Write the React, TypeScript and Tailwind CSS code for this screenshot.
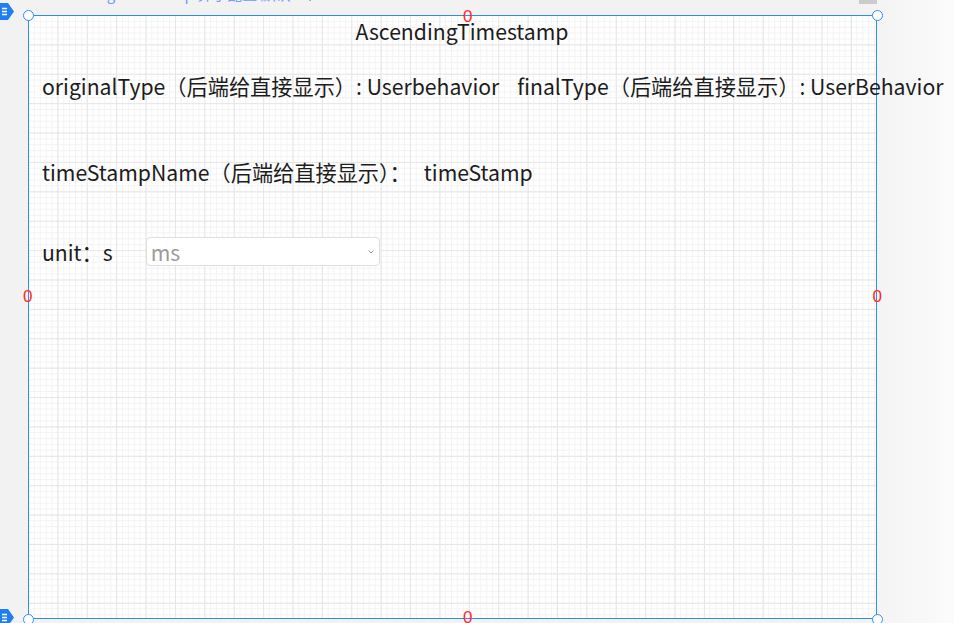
import React from 'react';

const font = "font-['Noto_Sans_CJK_SC','Noto_Sans',sans-serif]";

function Handle({ className }: { className: string }) {
  return (
    <div
      className={`absolute h-[11px] w-[11px] rounded-full border-[1.5px] border-[#2f8cf5] bg-white ${className}`}
    />
  );
}

function ZeroMark({ className }: { className: string }) {
  return (
    <span
      className={`absolute text-[17px] leading-none text-[#ff2b2b] font-['Liberation_Sans',sans-serif] ${className}`}
    >
      0
    </span>
  );
}

function Tag({ className }: { className: string }) {
  return (
    <svg className={`absolute ${className}`} width="14" height="17" viewBox="0 0 14 17">
      <path d="M0 0 H8 L14 8.5 L8 17 H0 Z" fill="#1f7ff0" />
      <path d="M2 5.5 H7 M2 8.5 H7 M2 11.5 H7" stroke="#fff" strokeWidth="1.4" />
    </svg>
  );
}

export default function App() {
  return (
    <div className={`relative h-[623px] w-[954px] overflow-hidden bg-[linear-gradient(to_right,#f2f2f2_0%,#f2f2f2_90%,#fbfbfb_100%)] ${font}`}>
      {/* cut-off header strip */}
      <div className="flex h-[15px] items-start pl-[43px]">
        <div className="h-[4px] overflow-hidden">
          <div className="-mt-[15px] text-[15px] leading-[18px] text-[#6f9ef8]">AscendingTimestamp 算子配置 默认</div>
        </div>
        <svg className="ml-[14px] -mt-[4px]" width="10" height="8" viewBox="0 0 10 8">
          <path d="M0 0 L5 5 L10 0 Z" fill="#1f7ff0" />
        </svg>
        <div className="ml-auto mr-[77px] h-[4px] w-[18px] bg-[#c9cbcd]" />
      </div>
      <Tag className="left-0 top-[3px]" />
      <Tag className="left-0 top-[609px]" />

      <div className="relative ml-[28px] h-[604px] w-[849px] border-[1.5px] border-[#2f8cf5] bg-white [background-image:linear-gradient(to_right,#e6e6e6_1px,transparent_1px),linear-gradient(to_bottom,#e6e6e6_1px,transparent_1px),linear-gradient(to_right,#f3f3f3_1px,transparent_1px),linear-gradient(to_bottom,#f3f3f3_1px,transparent_1px)] [background-size:29.4px_29.4px,29.4px_29.4px,5.88px_5.88px,5.88px_5.88px] [background-position:-1px_-1px]">
        <div className="flex flex-col pl-[13px] text-[21.2px] leading-[28px] text-[#1c1c1c]">
          <div className="pt-[1px] pl-[6px] text-center">AscendingTimestamp</div>
          <div className="mt-[27px] flex gap-[18px] whitespace-nowrap">
            <span>originalType（后端给直接显示）: Userbehavior</span>
            <span>finalType（后端给直接显示）: UserBehavior</span>
          </div>
          <div className="mt-[58px] whitespace-nowrap">
            timeStampName（后端给直接显示）：<span className="ml-[13px]">timeStamp</span>
          </div>
          <div className="mt-[52px] flex items-center gap-[33px] whitespace-nowrap">
            <span>unit：s</span>
            <div className="-mt-[1px] flex h-[29px] w-[234px] items-center justify-between rounded-[4px] border border-[#dedede] bg-white pl-[4px] pr-[5px]">
              <span className="text-[#9a9a9a]">ms</span>
              <svg width="6" height="4" viewBox="0 0 6 4">
                <path d="M0.5 0.5 L3 3 L5.5 0.5" fill="none" stroke="#888" strokeWidth="0.9" />
              </svg>
            </div>
          </div>
        </div>

        <Handle className="-left-[6.5px] -top-[6.5px]" />
        <Handle className="-right-[6.5px] -top-[6.5px]" />
        <Handle className="-left-[6.5px] -bottom-[6.5px]" />
        <Handle className="-right-[6.5px] -bottom-[6.5px]" />
        <ZeroMark className="left-[434px] -top-[8px]" />
        <ZeroMark className="-left-[6px] top-[272px]" />
        <ZeroMark className="-right-[6px] top-[272px]" />
        <ZeroMark className="left-[434px] -bottom-[8px]" />
      </div>
    </div>
  );
}
